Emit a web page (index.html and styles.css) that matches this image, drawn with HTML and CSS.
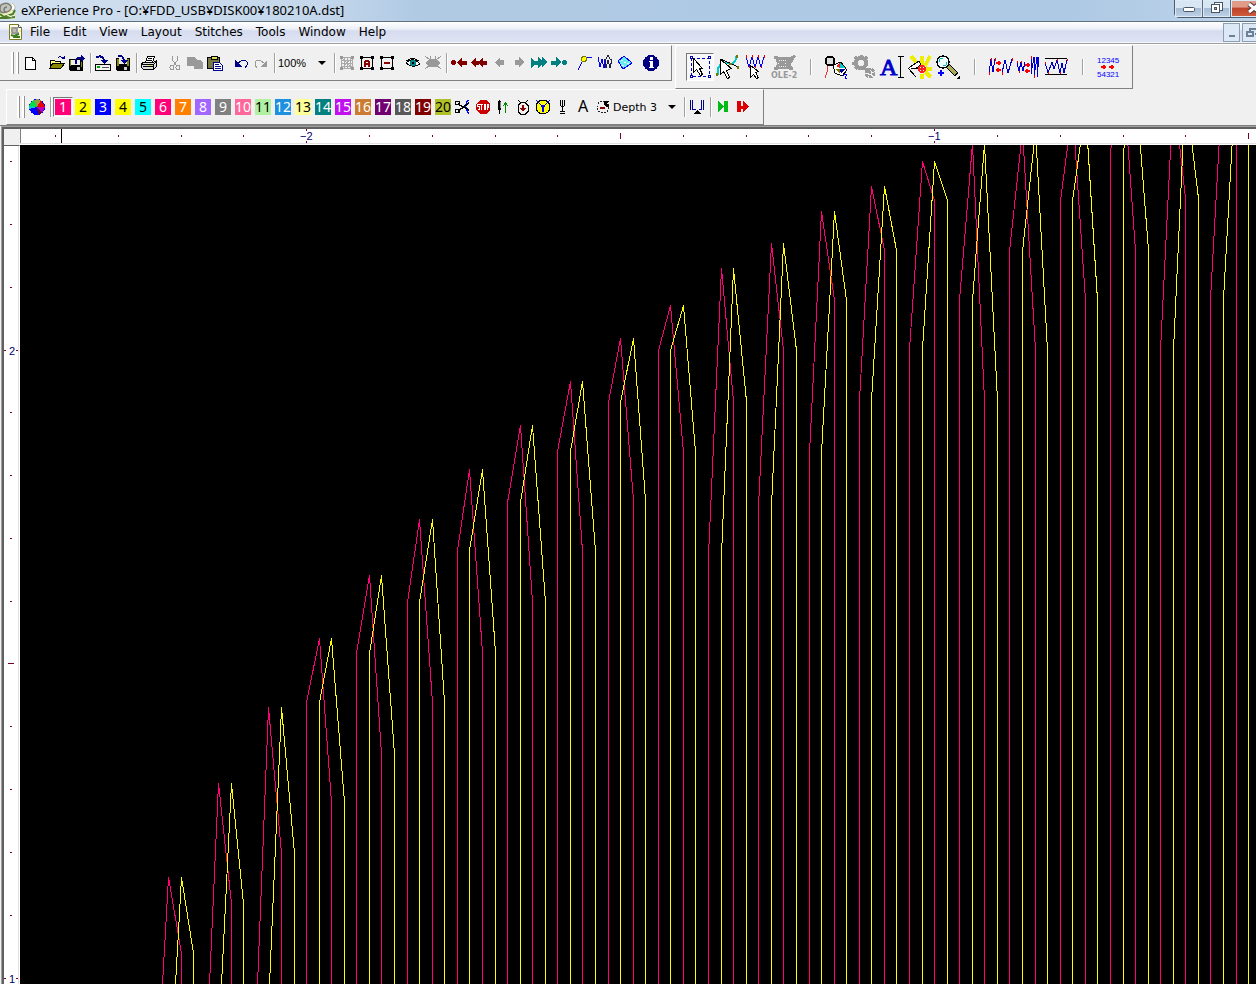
FILE: index.html
```html
<!DOCTYPE html>
<html lang="en">
<head>
<meta charset="utf-8">
<title>eXPerience Pro</title>
<link rel="stylesheet" href="styles.css">
</head>
<body>
<div class="app">
<header class="titlebar">
  <svg class="logo" width="16" height="17" viewBox="0 0 16 17"><rect x="0" y="1" width="15" height="15" fill="#eeeeb8"/><path d="M6 9Q0 11 0 6T3 1q4-2 7 1t-1 6q-4 3-5-1 0-3 3-3" fill="#c4c4be" stroke="#7d7d78" stroke-width="1.500"/><path d="M12 0l3 3v3l-3 2" fill="#fff" stroke="#bbb"/><path d="M0 11l4 3 9-3 2-4M0 15h7l8-1" fill="none" stroke="#4c7d28" stroke-width="2"/><path d="M7 12l5 2" stroke="#fff" stroke-width="1"/></svg>
  <h1 class="title">eXPerience Pro - [O:¥FDD_USB¥DISK00¥180210A.dst]</h1>
  <div class="winbuttons">
    <button class="win" aria-label="Minimize"><svg width="14" height="14"><rect x="1.500" y="6.500" width="11" height="4" rx="1" fill="#fff" stroke="#4a5668"/></svg></button>
    <button class="win" aria-label="Restore"><svg width="14" height="14" fill="#fff" stroke="#4a5668"><rect x="4.500" y="1.500" width="8" height="8"/><rect x="1.500" y="3.500" width="8" height="8"/><rect x="4.500" y="6.500" width="2" height="2" fill="#9cb4ce"/></svg></button>
    <button class="win close" aria-label="Close"><svg width="14" height="14"><path d="M2 3l10 8M12 3l-10 8" stroke="#4a3038" stroke-width="5"/><path d="M2 3l10 8M12 3l-10 8" stroke="#fff" stroke-width="3"/></svg></button>
  </div>
</header>
<nav class="menubar">
  <svg class="doc" width="13" height="16" viewBox="0 0 13 16"><path d="M.5.500h9l3 3v12H.500z" fill="#fffff0" stroke="#7c7c20"/><path d="M9.500.500v3h3" fill="#fff" stroke="#555"/><path d="M3 4h5v5H3zM5 9h5" stroke="#999" fill="#bcbca8" stroke-width="2"/><path d="M2 11l3 1 5-2M4 13h7" stroke="#3f7a20" fill="none" stroke-width="2"/><path d="M2 3v2M2 8v1M11 6v2" stroke="#dd4"/></svg>
  <button>File</button><button>Edit</button><button>View</button><button>Layout</button><button>Stitches</button><button>Tools</button><button>Window</button><button>Help</button>
  <div class="mdibuttons">
    <button class="mdi" aria-label="Minimize document"><svg width="12" height="14"><path d="M3 11h6" stroke="#6d8196" stroke-width="2"/></svg></button>
    <button class="mdi" aria-label="Restore document"><svg width="12" height="14" fill="none" stroke="#6d8196" stroke-width="2"><path d="M5 6V4h7v5h-2M2 7h6v4H2z"/></svg></button>
  </div>
</nav>
<div class="toolbars">
<div class="toolrow">
<div class="toolbar standard" role="toolbar" aria-label="Standard">
  <span class="grip"></span>
  <button class="tb" aria-label="New"><svg viewBox="0 0 16 16"><path d="M2.500 2.500h7l3 3v9h-10z" fill="#fff" stroke="#000"/><path d="M9.500 2.500v3h3" fill="none" stroke="#000"/></svg></button>
  <span class="gap"></span>
  <button class="tb" aria-label="Open"><svg viewBox="0 0 16 16"><path d="M1 13V5h4l1 1h5v3" fill="#ff8" stroke="#000"/><path d="M1 13l3-5h12l-4 5z" fill="#880" stroke="#000"/><path d="M9 3q3-3 5 1" fill="none" stroke="#008"/><path d="M12 4h4V1z" fill="#008"/></svg></button>
  <button class="tb" aria-label="Save as"><svg viewBox="0 0 16 16"><path d="M0 4h14v12H1l-1-1z" fill="#000"/><path d="M2 5h9v5H2z" fill="#f0f0f0"/><path d="M1 5h1v6H1zM12 6h1v6h-1z" fill="#880"/><path d="M8 12h3v3H8z" fill="#ccc"/><path d="M7 9V5q0-2 5-2" fill="none" stroke="#008" stroke-width="2"/><path d="M12 0l4 3-4 4z" fill="#008"/></svg></button>
  <span class="sep"></span>
  <button class="tb" aria-label="Read from disk"><svg viewBox="0 0 16 16"><path d="M.5 9.500h15v6H.500z" fill="#f4f4f4" stroke="#000"/><path d="M2 12h3" stroke="#0a0" stroke-width="2"/><path d="M7 12.500h7" stroke="#555"/><path d="M1 2q7-2 8 3" fill="none" stroke="#008" stroke-width="2"/><path d="M5 5h8L9 9z" fill="#008"/></svg></button>
  <button class="tb" aria-label="Write to disk"><svg viewBox="0 0 16 16"><path d="M1 3h14v13H2l-1-1z" fill="#000"/><path d="M2 4h2v7H2zM12 4h2v7h-2z" fill="#880"/><path d="M4 3h8v6H4z" fill="#e8e8e8"/><path d="M9 12h3v3H9z" fill="#ccc"/><path d="M3 1q5-1 6 4" fill="none" stroke="#008" stroke-width="2"/><path d="M5 5h8L9 9z" fill="#008"/></svg></button>
  <span class="sep"></span>
  <button class="tb" aria-label="Print"><svg viewBox="0 0 16 16"><path d="M4.500 7.500l2-6h7l-2 6z" fill="#fff" stroke="#000"/><path d="M7 3.500h4M6 5.500h5" stroke="#000"/><path d="M.5 8.500l2-1h10l3-2v6l-3 3H2.500l-2-2z" fill="#ddd" stroke="#000"/><path d="M1 9.500h11.500v4M12.500 9.500l3-3" stroke="#000" fill="none"/><path d="M2 11.500h10" stroke="#000"/><path d="M8 10.500h2" stroke="#dd0"/></svg></button>
  <span class="gap"></span>
  <button class="tb" aria-label="Cut"><svg viewBox="0 0 16 16" fill="none" stroke="#999"><path d="M5.500 1v4l4 6M10.500 1v4l-4 6"/><circle cx="5" cy="12.500" r="2"/><circle cx="11" cy="12.500" r="2"/></svg></button>
  <button class="tb" aria-label="Copy"><svg viewBox="0 0 16 16"><path d="M0 2h7l3 3v6H0zM7 5h6l3 3v6H7z" fill="#999"/></svg></button>
  <button class="tb" aria-label="Paste"><svg viewBox="0 0 16 16"><path d="M.5 2.500h12v11H.500z" fill="#774" stroke="#000"/><path d="M4 1h6v3H4z" fill="#dd5" stroke="#000"/><path d="M6.500 7.500h6l3 3v5h-9z" fill="#fff" stroke="#008"/><path d="M8 9.500h4M8 11.500h6M8 13.500h6" stroke="#008"/></svg></button>
  <span class="gap"></span>
  <button class="tb" aria-label="Undo"><svg viewBox="0 0 16 16"><path d="M4 9l5-4h3l2 2v3l-2 3" fill="none" stroke="#008"/><path d="M2 5v7h7z" fill="#008"/></svg></button>
  <button class="tb" aria-label="Redo"><svg viewBox="0 0 16 16"><path d="M12 9L7 5H4L2 7v3l2 3" fill="none" stroke="#999"/><path d="M14 5v7H7z" fill="#999"/></svg></button>
  <span class="sep"></span>
  <label class="combo zoom"><select aria-label="Zoom"><option>100%</option><option>200%</option></select><svg width="8" height="4"><path d="M0 0h8L4 4z"/></svg></label>
  <span class="sep"></span>
  <button class="tb" aria-label="Clear selection"><svg viewBox="0 0 16 16" stroke="#888" fill="none"><path d="M2.500 2.500h11v11h-11zM2 2l12 12M14 2L2 14M5 2v12M8 2v12M11 2v12M2 5h12M2 8h12M2 11h12" stroke="#aaa"/><path d="M1 1h3v3H1zM12 1h3v3h-3zM1 12h3v3H1zM12 12h3v3h-3z" fill="#999" stroke="none"/></svg></button>
  <button class="tb" aria-label="Select all"><svg viewBox="0 0 16 16"><path d="M2.500 3v11M13.500 3v11M3 2.500h10M3 13.500h10" stroke="#000"/><path d="M1 1h3v3H1zM12 1h3v3h-3zM1 12h3v3H1zM12 12h3v3h-3z"/><path d="M6 12V8q0-2 2-2t2 2v4M6 9h4" fill="none" stroke="#800" stroke-width="2"/></svg></button>
  <button class="tb" aria-label="Select none"><svg viewBox="0 0 16 16"><path d="M2.500 3v11M13.500 3v11M3 2.500h10M3 13.500h10" stroke="#000"/><path d="M1 1h3v3H1zM12 1h3v3h-3zM1 12h3v3H1zM12 12h3v3h-3z"/><path d="M5 7h6v2H5z" fill="#800"/></svg></button>
  <span class="gap"></span>
  <button class="tb" aria-label="Show"><svg viewBox="0 0 16 16"><path d="M1 8q7-7 14 1-7 5-14-1" fill="#fff" stroke="#000"/><path d="M1 6q7-5 13 0" fill="none" stroke="#000"/><circle cx="8" cy="8" r="3" fill="#088"/><path d="M7 7h2v2H7z"/></svg></button>
  <button class="tb" aria-label="Hide"><svg viewBox="0 0 16 16"><path d="M1 8q3-4 7-4t7 4q-3 4-7 4T1 8M0 1l16 13M16 1L0 14M5 1l1 3M11 1l-1 3" fill="#999" stroke="#999"/></svg></button>
  <span class="sep"></span>
  <button class="tb" aria-label="First"><svg viewBox="0 0 16 16" fill="#800000"><path d="M0 6h1V5h3v1h1v3H4v1H1V9H0zM6 7l5-5v4h5v4h-5v3z"/></svg></button>
  <button class="tb" aria-label="Previous color"><svg viewBox="0 0 16 16" fill="#800000"><path d="M0 7l5-5v4h3l4-4v4h4v4h-4v3L8 9v1H5v3z"/></svg></button>
  <button class="tb" aria-label="Previous"><svg viewBox="0 0 16 16" fill="#999"><path d="M4 7l5-5v3h4v5H9v3z"/></svg></button>
  <button class="tb" aria-label="Next"><svg viewBox="0 0 16 16" fill="#999"><path d="M13 7L8 2v3H4v5h4v3z"/></svg></button>
  <button class="tb" aria-label="Next color"><svg viewBox="0 0 16 16" fill="#008080"><path d="M16 7l-5-5v4L8 3V2H7v4H0v4h7v3l4-4v4z"/><path d="M0 3l4 3H0zM0 13l4-3H0z"/></svg></button>
  <button class="tb" aria-label="Last"><svg viewBox="0 0 16 16" fill="#008080"><path d="M16 6h-1V5h-3v1h-1v3h1v1h3V9h1zM10 7L5 2v4H0v4h5v3z"/></svg></button>
  <span class="gap"></span>
  <button class="tb" aria-label="Point"><svg viewBox="0 0 16 16"><path d="M1 15l4-8 3-4 7-1" fill="none" stroke="#00f"/><circle cx="7" cy="4" r="2.500" fill="#ff0" stroke="#770"/></svg></button>
  <button class="tb" aria-label="Stitch edit"><svg viewBox="0 0 16 16" fill="none"><path d="M1 2l2 10 2-8 2 9 2-9" stroke="#00f"/><path d="M7 4l2 9 2-8 2 8 2-9M7 4h2l2-4 2 4h2" stroke="#224"/></svg></button>
  <button class="tb" aria-label="Shape"><svg viewBox="0 0 16 16"><path d="M1 6l6-5 8 7-9 6z" fill="#6ee" stroke="#00f"/><path d="M4 5h2M7 7h2M5 10h2M10 8h2" stroke="#fff"/></svg></button>
  <span class="gap"></span>
  <button class="tb" aria-label="Information"><svg viewBox="0 0 16 16"><circle cx="8" cy="8" r="8" fill="#000080"/><path d="M7 2h3v3H7zM6 6h4v6h1v1H6v-1h1V7H6z" fill="#fff"/></svg></button>
</div>
<div class="toolbar edit" role="toolbar" aria-label="Edit tools">
  <button class="big pressed" aria-label="Select"><svg viewBox="0 0 24 24"><path d="M3.500 3.500h18v18h-18z" fill="none" stroke="#00c" stroke-dasharray="3 2"/><g fill="#fff" stroke="#00a"><path d="M2.500 1.500h2v2h-2zM20.500 1.500h2v2h-2zM2.500 20.500h2v2h-2zM20.500 20.500h2v2h-2z"/></g><path d="M5.500 3.500v14l3-3 4 6 2-1-3-6h3z" fill="#fff" stroke="#000"/></svg></button>
  <button class="big" aria-label="Edit curve"><svg viewBox="0 0 24 24"><path d="M1.500 20v-5q2-6 6-7t8 1q4-1 5-8" fill="none" stroke="#0cc" stroke-width="2"/><path d="M5 4l17 8" stroke="#000"/><path d="M20 0h2v3h-2zM0 18h2v3H0zM13 8h3v2h-3zM21 11h2v3h-2z" fill="#770"/><path d="M4.500 4.500v15l3-3 4 7 2-1-3-7 5-2z" fill="#fff" stroke="#000"/></svg></button>
  <button class="big" aria-label="Edit stitches"><svg viewBox="0 0 24 24"><path d="M2 2l3 10 3-10 3 10 3-10 3 10 3-10" fill="none" stroke="#00f"/><path d="M2 0v3M8 0v3M14 0v3M20 0v3M5 11v2M11 11v2M17 11v2" stroke="#e00"/><path d="M6.500 10.500v12l3-3 3 4 2-1-3-5 3-1z" fill="#fff" stroke="#000"/></svg></button>
  <button class="big" aria-label="OLE-2"><svg viewBox="0 0 24 24"><path d="M3 2h15l4-2 2 1-3 5-2 2 1 6H3l2-5zM2 1h4v3H2zM2 12h4v3H2zM17 12h4v3h-4z" fill="#999"/><path d="M7 5h7M7 11h7M6 8h2M13 8h2" stroke="#eee" stroke-dasharray="1 1"/><text x="-1" y="23" font-size="8" font-weight="bold" fill="#999">OLE-2</text></svg></button>
  <span class="bigsep"></span>
  <button class="big" aria-label="Thread"><svg viewBox="0 0 24 24"><path d="M4 10q-1 4-1 7l-2 6" fill="none" stroke="#e33"/><path d="M18 21q6-3 4 0t1 3" fill="none" stroke="#00f"/><circle cx="6" cy="6" r="4.500" fill="#ddd" stroke="#000" stroke-width="2"/><path d="M9 10l8-3 6 8-5 6-7-3z" fill="#fff" stroke="#000"/><path d="M12 11l4-3v5z" fill="#e22"/><path d="M16 8l5 5h-5z" fill="#0cc"/><path d="M11 14h5v5z" fill="#770"/><path d="M16 14h5l-4 5z" fill="#009"/></svg></button>
  <button class="big" aria-label="Settings"><svg viewBox="0 0 24 24" fill="none" stroke="#999"><circle cx="9" cy="8" r="5" stroke-width="4"/><path d="M9 0v4M2 8H0M3 2l3 3M15 2l-2 2M3 14l3-3" stroke-width="3"/><circle cx="18" cy="18" r="4" stroke-width="3" stroke-dasharray="3 1"/><path d="M11 12l8 6" stroke-width="3"/></svg></button>
  <button class="big" aria-label="Text"><svg viewBox="0 0 24 24"><text x="0" y="20" class="serif" font-size="24" fill="#00c" stroke="#00c">A</text><path d="M18 1.500h6M18 22.500h6M20.500 2v20" stroke="#000"/></svg></button>
  <button class="big" aria-label="Magic"><svg viewBox="0 0 24 24"><path d="M11 11L3 1M14 11V1M17 11L22 1M18 14h6M17 17l6 5M14 19v5" stroke="#ee0" stroke-width="4"/><path d="M0 13.500L11 6l2 4-6 4" fill="#fff" stroke="#000"/><path d="M0 13l8 9M3 13h7" stroke="#000"/><circle cx="14" cy="14" r="4" fill="#f22"/><path d="M12 12h1v1h-1zM15 12h1v1h-1zM12 15h1v1h-1zM15 15h1v1h-1z" fill="#fff"/></svg></button>
  <button class="big" aria-label="Zoom in"><svg viewBox="0 0 24 24"><path d="M12 11l9 9" stroke="#000" stroke-width="5"/><path d="M12 11l8 8" stroke="#aa5" stroke-width="3"/><circle cx="7" cy="7" r="6" fill="#eff" stroke="#000" stroke-width="1.500"/><path d="M3 7q0-4 4-4M7 11q4 0 4-4" stroke="#0bb" fill="none"/><path d="M5 15v6M2 18h6" stroke="#00f" stroke-width="2"/><path d="M24 20v4h-4z"/></svg></button>
  <span class="bigsep"></span>
  <button class="big" aria-label="Spread stitches"><svg viewBox="0 0 24 24" fill="none"><path d="M1 18L3 4l2 13L7 4M14 18l3-13 3 13 4-14" stroke="#00c"/><path d="M3 3v3M7 3v3M1 17v3M14 17v3M24 3v3" stroke="#e00"/><path d="M8 8h5M8 15h5M11 6v4M10 13v4" stroke="#f00" stroke-width="2"/></svg></button>
  <button class="big" aria-label="Change height"><svg viewBox="0 0 24 24" fill="none"><path d="M1 7l2 9 2-9 2 9 2-9M15 2v17l3-17v20l3-20v20l2-20" stroke="#00c"/><path d="M1 6v2M5 6v2M3 16v2M15 1v3M18 20v3" stroke="#e00"/><path d="M9 10h5M9 16h5M12 8v4M11 14v4" stroke="#f00" stroke-width="2"/></svg></button>
  <button class="big" aria-label="Limit stitches"><svg viewBox="0 0 24 24" fill="none"><path d="M1 3.500h22M1 19.500h22" stroke="#000"/><path d="M1 7l3 11 4-11 2 7 3-9 3 13 2-10 2 10 3-13" stroke="#00c"/><path d="M1 7v2M13 4v2M16 17v2M4 17v2M23 4v2" stroke="#e00"/></svg></button>
  <span class="bigsep"></span>
  <button class="big" aria-label="Reverse order"><svg viewBox="0 0 24 24"><g class="sans" font-size="8" fill="#00f"><text x="1" y="8">12345</text><text x="1" y="22">54321</text></g><path d="M5 12h5M13 12h5M8 10v4M16 10v4" stroke="#f00" stroke-width="2"/></svg></button>
</div>
</div>
<div class="toolbar colors" role="toolbar" aria-label="Colors">
  <span class="grip"></span>
  <button class="tb" aria-label="Color wheel"><svg viewBox="0 0 16 16"><circle cx="8" cy="8" r="8" fill="#00f"/><path d="M8 8L5 1l3-1 4 1z" fill="#994"/><path d="M8 8l4-7 4 7z" fill="#e00"/><path d="M8 8h8l-3 6z" fill="#b0b"/><path d="M8 8l5 6-4 2z" fill="#604"/><path d="M8 8L0 7l2-4 3-2z" fill="#0d4"/><path d="M8 8L0 7v3z" fill="#0cc"/></svg></button>
  <span class="sep"></span>
  <button class="sw active"><i class="c1">1</i></button><button class="sw"><i class="c2">2</i></button><button class="sw"><i class="c3">3</i></button><button class="sw"><i class="c4">4</i></button><button class="sw"><i class="c5">5</i></button><button class="sw"><i class="c6">6</i></button><button class="sw"><i class="c7">7</i></button><button class="sw"><i class="c8">8</i></button><button class="sw"><i class="c9">9</i></button><button class="sw"><i class="c10">10</i></button><button class="sw"><i class="c11">11</i></button><button class="sw"><i class="c12">12</i></button><button class="sw"><i class="c13">13</i></button><button class="sw"><i class="c14">14</i></button><button class="sw"><i class="c15">15</i></button><button class="sw"><i class="c16">16</i></button><button class="sw"><i class="c17">17</i></button><button class="sw"><i class="c18">18</i></button><button class="sw"><i class="c19">19</i></button><button class="sw"><i class="c20">20</i></button>
  <button class="tb" aria-label="Trim"><svg viewBox="0 0 16 16" fill="none"><path d="M14 1q-4 2-3 7t3 7" stroke="#00f"/><path d="M3 5l11 6M3 12l11-8" stroke="#000" stroke-width="1.500"/><circle cx="2.500" cy="4" r="2" stroke="#000"/><circle cx="2.500" cy="12" r="2" stroke="#000"/></svg></button>
  <button class="tb" aria-label="Stop"><svg viewBox="0 0 16 16"><path d="M5 1h6l4 4v6l-4 4H5l-4-4V5z" fill="#c00"/><path d="M4.500 5.500h-2v2h2v3h-2M5 5.500h3M6.500 6v5M9.500 5.500h1v5h-1zM12.500 11V5.500h1v3h-1" fill="none" stroke="#fff"/></svg></button>
  <button class="tb" aria-label="Needle up"><svg viewBox="0 0 16 16"><path d="M4.500 1v14" stroke="#000"/><path d="M3 2h3v8l-1 3-2-3z"/><path d="M5 3h1v6H5z" fill="#888"/><path d="M10.500 14V4M8 7l2.500-3L13 7" stroke="#080" fill="none"/></svg></button>
  <button class="tb" aria-label="Jump"><svg viewBox="0 0 16 16" fill="none"><path d="M6 3.500h4l3 3v6l-3 3H6l-3-3v-6z" stroke="#000"/><path d="M8 6v4" stroke="#800" stroke-width="2"/><path d="M5 9h6l-3 4z" fill="#800"/><path d="M3 1l2 2M13 1l-2 2" stroke="#000"/></svg></button>
  <button class="tb" aria-label="Sequin"><svg viewBox="0 0 16 16"><circle cx="8" cy="8" r="7" fill="#ff0" stroke="#000"/><path d="M1 1l7 7 7-7" stroke="#00f" fill="none"/><path d="M8 7v6M6 7h4" stroke="#00f" stroke-width="2"/></svg></button>
  <button class="tb" aria-label="Bore"><svg viewBox="0 0 16 16"><path d="M5.500 1v5l2 3v4M9.500 1v5l-2 3M7.500 1v8" fill="none" stroke="#000"/><path d="M5 12.500h5M5 14.500h5" stroke="#000"/></svg></button>
  <button class="tb" aria-label="Letter"><svg viewBox="0 0 16 16"><text x="3" y="13" class="noto" font-size="16">A</text></svg></button>
  <button class="tb" aria-label="Rotate"><svg viewBox="0 0 16 16"><circle cx="8" cy="8" r="6" fill="none" stroke="#222" stroke-dasharray="2 1"/><path d="M5 9h5" stroke="#800" stroke-width="2"/><path d="M9 2h5l-2 2 2 3-2 1-3-2z"/></svg></button>
  <label class="combo depth"><select aria-label="Depth"><option>Depth 3</option><option>Depth 4</option></select><svg width="8" height="4"><path d="M0 0h8L4 4z"/></svg></label>
  <span class="sep"></span>
  <button class="tb" aria-label="Stitch depth"><svg viewBox="0 0 16 16"><path d="M1.500 1v10M3.500 1v10M12.500 1v10M14.500 1v10M4 10.500h3M10 10.500h3" stroke="#008"/><path d="M4 15l4-4 4 4z"/></svg></button>
  <span class="sep"></span>
  <button class="tb" aria-label="Go to end"><svg viewBox="0 0 16 16" fill="#0b1"><path d="M3 2l6 6-6 5zM9 2h4v11H9z"/></svg></button>
  <button class="tb" aria-label="Go on"><svg viewBox="0 0 16 16" fill="#d00"><path d="M2 2h4v11H2zM6 7h2v3H6zM8 2l6 6-6 5z"/></svg></button>
</div>
</div>
<main class="workspace">
  <div class="corner"></div>
  <svg class="ruler-x"><path class="cursor" d="M41.500 0v14"/><path class="ticks" d="M35.500 6v2M98.500 6v2M161.500 6v2M223.500 6v2M286.500 0v2M286.500 12v2M349.500 6v2M412.500 6v2M475.500 6v2M537.500 6v2M600.500 4v6M663.500 6v2M726.500 6v2M788.500 6v2M851.500 6v2M914.500 0v2M914.500 12v2M977.500 6v2M1040.500 6v2M1103.500 6v2M1165.500 6v2M1228.500 4v6"/><text x="280" y="11">−2</text><text x="908" y="11">−1</text></svg>
  <svg class="ruler-y"><path class="ticks" d="M6 15.500h2M6 78.500h2M6 141.500h2M0 204.500h2M12 204.500h2M6 266.500h2M6 329.500h2M6 392.500h2M6 455.500h2M4 517.500h6M6 580.500h2M6 643.500h2M6 706.500h2M6 769.500h2M0 832.500h2M12 832.500h2"/><text x="5" y="209">2</text><text x="5" y="837">1</text></svg>
  <svg class="design" role="img" aria-label="Stitch design"><g transform="translate(-19.500 -144.500)">
    <g class="pink">
      <path d="M162 984L168 877L181 953V4000"/><path d="M209 984L218 783L231 903V4000"/><path d="M257 984L268 707L281 853V4000"/><path d="M306 4000V702L319 638L331 802V4000"/><path d="M356 4000V653L369 575L381 754V4000"/><path d="M407 4000V602L419 519L432 702V4000"/><path d="M457 4000V550L469 469L482 652V4000"/><path d="M507 4000V502L520 425L532 602V4000"/><path d="M557 4000V451L570 381L582 551V4000"/><path d="M608 4000V402L620 338L633 500V4000"/><path d="M658 4000V350L670 305L683 452V4000"/><path d="M708 4000V555L721 268L733 401V4000"/><path d="M758 4000V506L771 243L783 350V4000"/><path d="M809 4000V453L821 211L834 300V4000"/><path d="M859 4000V400L871 186L884 250V4000"/><path d="M909 4000V349L922 161L934 200V4000"/><path d="M959 4000V300L972 143L984 400V4000"/><path d="M1009 4000V251L1022 130L1035 350V4000"/><path d="M1060 4000V200L1072 108L1085 300V4000"/><path d="M1110 4000V150L1123 83L1135 250V4000"/><path d="M1160 4000V350L1173 90L1185 198V4000"/><path d="M1210 4000V299L1223 65L1236 140V4000"/>
    </g>
    <g class="yellow">
      <path d="M175 984L181 877L193 953V4000"/><path d="M221 984L231 783L243 903V4000"/><path d="M269 984L281 707L294 853V4000"/><path d="M319 4000V702L331 638L344 802V4000"/><path d="M369 4000V653L381 575L394 754V4000"/><path d="M419 4000V602L432 519L444 702V4000"/><path d="M469 4000V550L482 469L495 652V4000"/><path d="M520 4000V502L532 425L545 602V4000"/><path d="M570 4000V451L582 381L595 551V4000"/><path d="M620 4000V402L633 338L645 500V4000"/><path d="M670 4000V350L683 305L695 452V4000"/><path d="M721 4000V555L733 268L746 401V4000"/><path d="M771 4000V506L783 243L796 350V4000"/><path d="M821 4000V453L834 211L846 300V4000"/><path d="M871 4000V400L884 186L896 250V4000"/><path d="M922 4000V349L934 161L947 200V4000"/><path d="M972 4000V300L984 143L997 400V4000"/><path d="M1022 4000V251L1035 130L1047 350V4000"/><path d="M1072 4000V200L1085 108L1097 300V4000"/><path d="M1123 4000V150L1135 83L1148 250V4000"/><path d="M1173 4000V350L1185 90L1198 198V4000"/><path d="M1223 4000V299L1236 65L1248 140V4000"/>
    </g>
  </g></svg>
</main>
</div>
</body>
</html>
```
FILE: styles.css
```css
* { box-sizing: border-box; }
body { margin: 0; background: #f0f0f0; font-family: "DejaVu Sans", sans-serif; font-size: 12px; color: #000; }
button { margin: 0; padding: 0; border: 0; background: none; font: inherit; color: inherit; }
svg { display: block; flex: none; overflow: visible; }
.app { display: flex; flex-direction: column; height: 100vh; overflow: hidden; }

.titlebar { display: flex; flex: none; height: 22px; align-items: flex-start; overflow: hidden; border-bottom: 1px solid #60707f; background: linear-gradient(90deg, #d2e0ef 0, #c4d7eb 320px, #b0cae4 420px, #aec9e4 85%, #bdd3ea); }
.logo { margin-top: 3px; }
.title { flex: 1; margin: 0; padding-left: 5px; font-family: "Noto Sans", sans-serif; font-size: 13px; font-weight: 400; line-height: 20px; white-space: nowrap; }
.winbuttons { display: flex; flex: none; height: 18px; margin-right: -21px; border: 1px solid #4d5c6c; border-top: 0; border-radius: 0 0 5px 5px; }
.win { display: flex; width: 28px; justify-content: center; align-items: flex-start; padding-top: 1px; border-right: 1px solid #5b6b7c; background: linear-gradient(#d8e5f2 0 45%, #a5bcd4 50%, #bfd3e8); box-shadow: inset 0 0 0 1px #dce9f6; }
.win.close { width: 45px; border: 0; background: linear-gradient(#e09a88 0 40%, #c0412a 50%, #d0603c); }

.menubar { display: flex; flex: none; height: 21px; align-items: center; gap: 13px; overflow: hidden; padding-left: 9px; border-bottom: 1px solid #f4f6fb; background: linear-gradient(#fff 0, #edf0f8 35%, #d6dcef 45%, #dfe4f4); }
.menubar > button { line-height: 18px; }
.menubar .doc { margin-right: -5px; }
.mdibuttons { display: flex; gap: 2px; margin-left: auto; margin-right: -3px; }
.mdi { display: flex; width: 17px; height: 19px; justify-content: center; align-items: center; border: 1px solid #8a9fb4; background: #dce8f5; }

.toolbars { flex: none; height: 83px; border-top: 1px solid #a0a0a0; border-bottom: 1px solid #808080; box-shadow: inset 0 1px #fff; background: #f0f0f0; }
.toolrow { display: flex; align-items: flex-start; padding-top: 1px; height: 45px; }
.toolbar { display: flex; align-items: center; border: 1px solid #808080; border-top-color: #fff; border-left-color: #fff; }
.standard { height: 36px; width: 672px; flex: none; padding-left: 11px; border-left: 0; }
.edit { height: 44px; width: 458px; flex: none; margin-left: 3px; padding-left: 10px; }
.colors { height: 36px; width: 758px; margin-left: 6px; padding-left: 10px; }
.grip { width: 10px; height: 22px; flex: none; border-left: 1px solid #fff; background: linear-gradient(90deg, #fff 0 1px, #909090 1px 2px, transparent 2px 4px, #fff 4px 6px, #909090 6px 7px, transparent 7px); }
.gap { width: 6px; flex: none; }
.sep { width: 6px; height: 20px; flex: none; background: linear-gradient(90deg, transparent 3px, #a0a0a0 3px 4px, #fff 4px 5px, transparent 5px); }
.bigsep { width: 24px; height: 16px; flex: none; background: linear-gradient(90deg, transparent 12px, #a0a0a0 12px 13px, #fff 13px 14px, transparent 14px); }
.tb { display: flex; width: 20px; height: 20px; flex: none; justify-content: center; align-items: center; }
.tb svg { width: 16px; height: 16px; shape-rendering: crispEdges; }
.big { display: flex; width: 28px; height: 28px; flex: none; justify-content: center; align-items: center; }
.big svg { width: 24px; height: 24px; shape-rendering: crispEdges; }
.serif { font-family: "Liberation Serif", serif; }
.sans { font-family: "Liberation Sans", sans-serif; }
.noto { font-family: "Noto Sans", sans-serif; }
.pressed { border: 1px solid #fff; border-top-color: #777; border-left-color: #777; background: #f8f8f8; }

.combo { display: flex; flex: none; align-items: center; height: 20px; padding: 0 5px 0 1px; }
.combo select { flex: 1; min-width: 0; padding: 0; border: 0; background: none; appearance: none; font: inherit; color: inherit; }
.zoom { width: 54px; font-family: "Liberation Sans", sans-serif; font-size: 11px; }
.depth { width: 68px; padding-left: 0; font-size: 11px; }

.sw { display: flex; width: 20px; height: 20px; flex: none; justify-content: center; align-items: center; font-family: "Noto Sans", sans-serif; font-size: 14px; }
.sw i { width: 16px; height: 16px; font-style: normal; line-height: 16px; text-align: center; color: #fff; }
.active { border: 1px solid #fff; border-top-color: #777; border-left-color: #777; }
.sw .c1, .sw .c6 { background: #ff0078; }
.sw .c2, .sw .c4 { background: #ff0; color: #000; }
.sw .c3 { background: #00f; }
.sw .c5 { background: #0ff; color: #000; }
.sw .c7 { background: #ff8000; }
.sw .c8 { background: #a066ff; }
.sw .c9 { background: #808080; }
.sw .c10 { background: #ff6699; }
.sw .c11 { background: #b0f0a0; color: #000; }
.sw .c12 { background: #1e90e0; }
.sw .c13 { background: #ffff98; color: #000; }
.sw .c14 { background: #008080; }
.sw .c15 { background: #c010f0; }
.sw .c16 { background: #cc7c30; }
.sw .c17 { background: #700070; }
.sw .c18 { background: #585858; }
.sw .c19 { background: #800000; }
.sw .c20 { background: #b0c028; color: #000; }

.workspace { display: grid; flex: 1; min-height: 0; grid-template: 16px 1fr / 16px 1fr; border: solid #606060; border-width: 2px 0 0 2px; outline: 1px solid #a0a0a0; margin-top: 1px; margin-left: 2px; }
.corner { background: #f0f0f0; }
.workspace svg { width: 100%; height: 100%; overflow: hidden; }
.workspace .ruler-x { background: #fff; border-bottom: 1px solid #fff; box-shadow: inset 0 -1px #e0e0e0, inset 1px 0 #808080; }
.workspace .ruler-y { background: #fff; border-top: 1px solid #606060; border-right: 1px solid #fff; box-shadow: inset -1px 0 #e0e0e0; }
.workspace .design { background: #000; shape-rendering: crispEdges; }
.ticks { stroke: #700030; }
.cursor { stroke: #000; }
.ruler-x text, .ruler-y text { font-family: "Liberation Sans", sans-serif; font-size: 11px; fill: #000070; }
.design g { fill: none; }
.pink { stroke: #ff0078; }
.yellow { stroke: #ff0; }
```
